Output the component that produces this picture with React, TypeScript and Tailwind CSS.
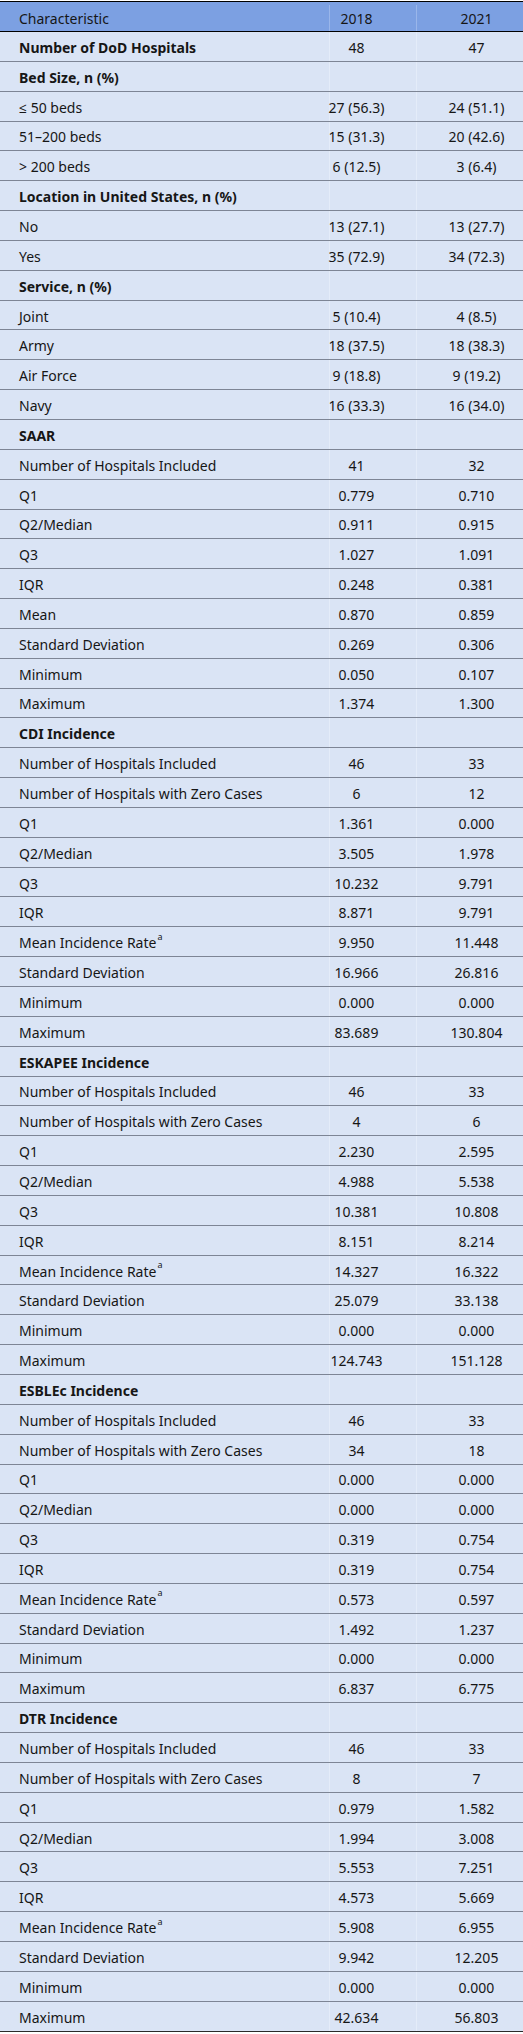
import React from "react";

type Row = { label: string; a?: string; b?: string; head?: boolean; sup?: boolean };

const stats = (v: string[][]): Row[] =>
  v.map(([label, a, b]) => ({ label, a, b, sup: label === "Mean Incidence Rate" }));

const rows: Row[] = [
  { label: "Number of DoD Hospitals", a: "48", b: "47", head: true },
  { label: "Bed Size, n (%)", head: true },
  { label: "≤ 50 beds", a: "27 (56.3)", b: "24 (51.1)" },
  { label: "51–200 beds", a: "15 (31.3)", b: "20 (42.6)" },
  { label: "> 200 beds", a: "6 (12.5)", b: "3 (6.4)" },
  { label: "Location in United States, n (%)", head: true },
  { label: "No", a: "13 (27.1)", b: "13 (27.7)" },
  { label: "Yes", a: "35 (72.9)", b: "34 (72.3)" },
  { label: "Service, n (%)", head: true },
  { label: "Joint", a: "5 (10.4)", b: "4 (8.5)" },
  { label: "Army", a: "18 (37.5)", b: "18 (38.3)" },
  { label: "Air Force", a: "9 (18.8)", b: "9 (19.2)" },
  { label: "Navy", a: "16 (33.3)", b: "16 (34.0)" },
  { label: "SAAR", head: true },
  ...stats([
    ["Number of Hospitals Included", "41", "32"],
    ["Q1", "0.779", "0.710"],
    ["Q2/Median", "0.911", "0.915"],
    ["Q3", "1.027", "1.091"],
    ["IQR", "0.248", "0.381"],
    ["Mean", "0.870", "0.859"],
    ["Standard Deviation", "0.269", "0.306"],
    ["Minimum", "0.050", "0.107"],
    ["Maximum", "1.374", "1.300"],
  ]),
  { label: "CDI Incidence", head: true },
  ...stats([
    ["Number of Hospitals Included", "46", "33"],
    ["Number of Hospitals with Zero Cases", "6", "12"],
    ["Q1", "1.361", "0.000"],
    ["Q2/Median", "3.505", "1.978"],
    ["Q3", "10.232", "9.791"],
    ["IQR", "8.871", "9.791"],
    ["Mean Incidence Rate", "9.950", "11.448"],
    ["Standard Deviation", "16.966", "26.816"],
    ["Minimum", "0.000", "0.000"],
    ["Maximum", "83.689", "130.804"],
  ]),
  { label: "ESKAPEE Incidence", head: true },
  ...stats([
    ["Number of Hospitals Included", "46", "33"],
    ["Number of Hospitals with Zero Cases", "4", "6"],
    ["Q1", "2.230", "2.595"],
    ["Q2/Median", "4.988", "5.538"],
    ["Q3", "10.381", "10.808"],
    ["IQR", "8.151", "8.214"],
    ["Mean Incidence Rate", "14.327", "16.322"],
    ["Standard Deviation", "25.079", "33.138"],
    ["Minimum", "0.000", "0.000"],
    ["Maximum", "124.743", "151.128"],
  ]),
  { label: "ESBLEc Incidence", head: true },
  ...stats([
    ["Number of Hospitals Included", "46", "33"],
    ["Number of Hospitals with Zero Cases", "34", "18"],
    ["Q1", "0.000", "0.000"],
    ["Q2/Median", "0.000", "0.000"],
    ["Q3", "0.319", "0.754"],
    ["IQR", "0.319", "0.754"],
    ["Mean Incidence Rate", "0.573", "0.597"],
    ["Standard Deviation", "1.492", "1.237"],
    ["Minimum", "0.000", "0.000"],
    ["Maximum", "6.837", "6.775"],
  ]),
  { label: "DTR Incidence", head: true },
  ...stats([
    ["Number of Hospitals Included", "46", "33"],
    ["Number of Hospitals with Zero Cases", "8", "7"],
    ["Q1", "0.979", "1.582"],
    ["Q2/Median", "1.994", "3.008"],
    ["Q3", "5.553", "7.251"],
    ["IQR", "4.573", "5.669"],
    ["Mean Incidence Rate", "5.908", "6.955"],
    ["Standard Deviation", "9.942", "12.205"],
    ["Minimum", "0.000", "0.000"],
    ["Maximum", "42.634", "56.803"],
  ]),
];

export default function App() {
  return (
    <div className="w-[523px] bg-white pt-px font-['Noto_Sans','Open_Sans',sans-serif] text-[14px] text-[#161616]">
      <div className="border-t border-black">
        <div className="grid h-[30px] grid-cols-[329px_87px_107px] border-b border-black bg-[#7ca0e2] pt-[3px]">
          <div className="flex items-center pl-[19px]">Characteristic</div>
          <div className="flex items-center justify-center border-l border-[#9ab6ea] pr-[33px] whitespace-nowrap">2018</div>
          <div className="flex items-center justify-center border-l border-[#9ab6ea] pl-[13px] whitespace-nowrap">2021</div>
        </div>
        {rows.map((r, i) => (
          <div
            key={i}
            className={
              "grid h-[29.85px] grid-cols-[329px_87px_107px] border-b bg-[#dae4f5] " +
              (i === rows.length - 1 ? "border-[#2a2a2a]" : "border-[#7d8595]")
            }
          >
            <div className={"flex items-center pl-[19px] pt-[2px] whitespace-nowrap " + (r.head ? "font-bold" : "")}>
              {r.label}
              {r.sup && <sup className="ml-px -mt-[3px] text-[9px]">a</sup>}
            </div>
            <div className="flex items-center justify-center border-l border-[#e4ecf9] pr-[33px] pt-[2px] whitespace-nowrap">
              {r.a}
            </div>
            <div className="flex items-center justify-center border-l border-[#e4ecf9] pl-[13px] pt-[2px] whitespace-nowrap">
              {r.b}
            </div>
          </div>
        ))}
      </div>
    </div>
  );
}
